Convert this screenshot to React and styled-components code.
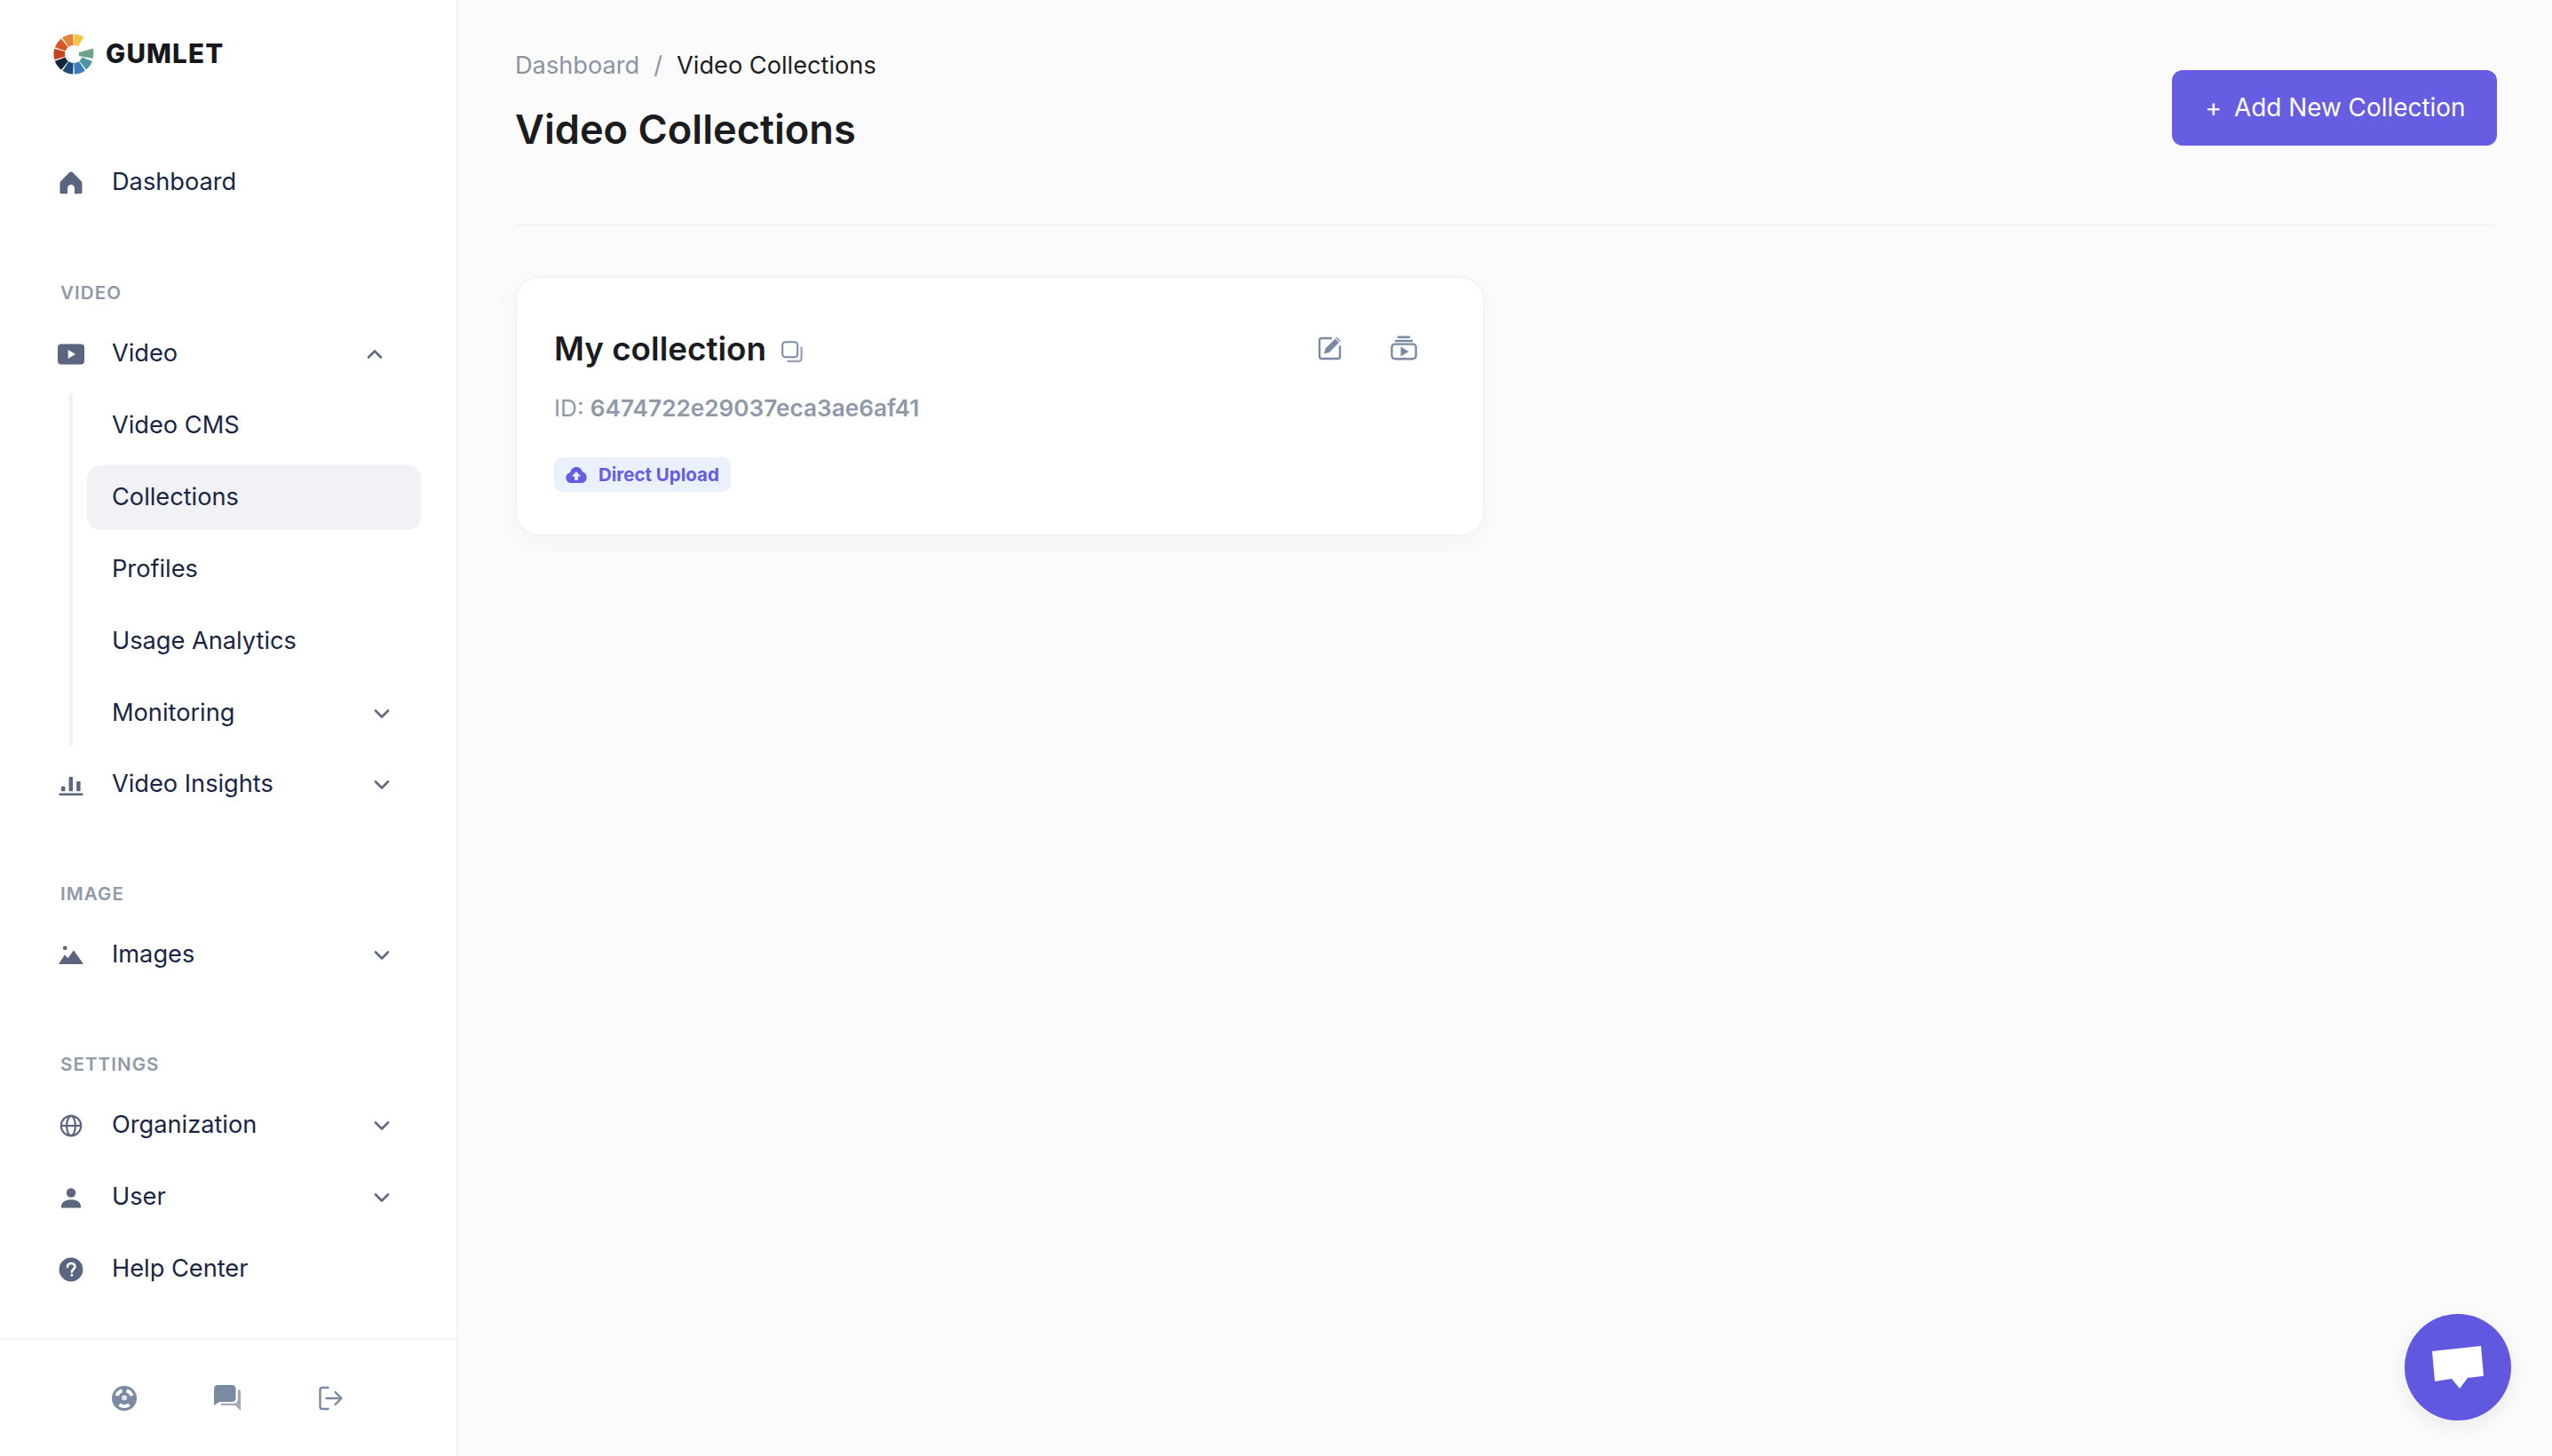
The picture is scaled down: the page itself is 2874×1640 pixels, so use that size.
import React from 'react';
import styled, { createGlobalStyle } from 'styled-components';

const Global = createGlobalStyle`
  html, body { margin: 0; padding: 0; background: #fbfbfc; }
  body { font-family: Inter, "Liberation Sans", sans-serif; -webkit-font-smoothing: antialiased; }
  * { box-sizing: border-box; }
`;

const Page = styled.div`
  display: flex;
  width: 2874px;
  height: 1640px;
  overflow: hidden;
  position: relative;
  background: #fbfbfc;
`;
const Sidebar = styled.aside`
  width: 516px;
  flex: none;
  display: flex;
  flex-direction: column;
  background: #fff;
  border-right: 2px solid #f2f2f7;
`;
const Brand = styled.div`
  height: 169px;
  padding: 38px 0 0 60px;
  display: flex;
  align-items: flex-start;
  gap: 13px;
`;
const BrandName = styled.span`
  font-size: 29.5px;
  line-height: 44px;
  font-weight: 800;
  letter-spacing: 1.2px;
  color: #17181c;
`;
const NavGroup = styled.nav`
  display: flex;
  flex-direction: column;
  gap: 8px;
  margin-bottom: ${p => p.$mb || 0}px;
`;
const SectionLabel = styled.div`
  height: 36px;
  line-height: 36px;
  padding-left: 68px;
  margin-bottom: 14px;
  font-size: 20.5px;
  font-weight: 600;
  letter-spacing: 1.1px;
  color: #8f99a8;
`;
const Row = styled.div`
  height: 73px;
  display: flex;
  align-items: center;
  padding-left: 62px;
  font-size: 27.2px;
  color: #1a2546;
`;
const IconSlot = styled.span`
  width: 36px;
  height: 36px;
  flex: none;
  display: flex;
  align-items: center;
  justify-content: center;
  margin-right: 28px;
  color: #5b6580;
`;
const RowText = styled.span`
  flex: 1;
  padding-bottom: 2px;
`;
const Chevron = styled.svg`
  width: 22px;
  height: 22px;
  flex: none;
  margin-right: ${p => p.$mr}px;
  color: #5f6b80;
`;
const SubList = styled.div`
  margin: 0 0 -1px 78px;
  border-left: 4px solid #f1f1f6;
  padding-left: 16px;
  display: flex;
  flex-direction: column;
  gap: 8px;
`;
const SubRow = styled.div`
  width: 376px;
  height: 73px;
  padding-left: 28px;
  display: flex;
  align-items: center;
  font-size: 27.2px;
  color: #1a2546;
  border-radius: 15px;
  background: ${p => (p.$active ? '#f1f2f6' : 'transparent')};
`;
const Footer = styled.div`
  margin-top: auto;
  height: 133px;
  border-top: 2px solid #f1f1f6;
  display: flex;
  justify-content: center;
  gap: 84px;
  align-items: center;
  padding-right: 3px;
  color: #7a8aa3;
`;
const FooterIcon = styled.span`
  width: 32px;
  height: 32px;
  display: flex;
  align-items: center;
  justify-content: center;
`;
const Main = styled.main`
  flex: 1;
  padding: 0 62px 0 64px;
  min-width: 0;
`;
const Header = styled.header`
  height: 255px;
  display: flex;
  justify-content: space-between;
  border-bottom: 2px solid #f1f1f6;
`;
const Crumbs = styled.div`
  padding-top: 56px;
  display: flex;
  align-items: center;
  gap: 16px;
  font-size: 27.2px;
  line-height: 35px;
  color: #8a94a3;
`;
const CrumbCurrent = styled.span`
  color: #1b1c26;
`;
const Title = styled.h1`
  margin: 26px 0 0;
  font-size: 45.2px;
  line-height: 58px;
  font-weight: 600;
  color: #1b1c1f;
`;
const AddButton = styled.button`
  margin-top: 79px;
  width: 366px;
  height: 85px;
  border: 0;
  padding: 0 0 2px 2px;
  border-radius: 12px;
  background: #665de3;
  color: #fff;
  display: flex;
  align-items: center;
  justify-content: center;
  gap: 14px;
  font: 400 27.9px Inter, sans-serif;
`;
const Card = styled.section`
  margin-top: 56px;
  width: 1092px;
  height: 293px;
  border-radius: 28px;
  background: #fff;
  border: 2px solid #f3f3f8;
  box-shadow: 0 8px 28px rgba(30, 30, 60, 0.035);
  padding: 0 42px;
`;
const CardTop = styled.div`
  height: 86px;
  margin-top: 36px;
  display: flex;
  align-items: center;
`;
const CardTitle = styled.h2`
  margin: 0;
  font-size: 36.8px;
  font-weight: 600;
  color: #1b1c1f;
`;
const CopyIcon = styled.svg`
  margin: 8px 0 0 17px;
  color: #7a8aa3;
`;
const CardActions = styled.div`
  margin-left: auto;
  display: flex;
  gap: 54px;
  padding-right: 32px;
  color: #7a8aa3;
`;
const IdLine = styled.div`
  margin-top: 7px;
  font-size: 26.2px;
  line-height: 36px;
  color: #8f99a8;
`;
const IdValue = styled.b`
  font-weight: 600;
`;
const Badge = styled.div`
  display: inline-flex;
  align-items: center;
  gap: 13px;
  margin-top: 37px;
  height: 39px;
  padding: 0 13px;
  border-radius: 9px;
  background: #ebf0fd;
  color: #665de3;
  font-size: 20.5px;
  font-weight: 700;
`;
const ChatBubble = styled.div`
  position: absolute;
  left: 2708px;
  top: 1480px;
  width: 120px;
  height: 120px;
  border-radius: 50%;
  background: #6158e0;
  box-shadow: 0 6px 24px rgba(30, 30, 60, 0.08);
  display: flex;
  align-items: center;
  justify-content: center;
`;

const wedge = (a0, a1, r0, r1, cx = 23, cy = 23) => {
  const p = (a, r) => {
    const t = (a - 90) * Math.PI / 180;
    return `${(cx + r * Math.cos(t)).toFixed(2)} ${(cy + r * Math.sin(t)).toFixed(2)}`;
  };
  return `M${p(a0, r0)}L${p(a0, r1)}A${r1} ${r1} 0 0 1 ${p(a1, r1)}L${p(a1, r0)}A${r0} ${r0} 0 0 0 ${p(a0, r0)}Z`;
};
const logoSegs = [
  [1, 30, '#f4c23f'], [111, 141, '#4f93a3'], [145, 178, '#3a7dbd'], [182, 214, '#1e4c78'],
  [218, 250, '#14283b'], [254, 286, '#c6431f'], [290, 321, '#d9582a'], [325, 358, '#e5823a'],
];
const Logo = () => (
  <svg width="46" height="46" viewBox="0 0 46 46">
    {logoSegs.map(([a, b, c]) => <path key={a} d={wedge(a, b, 10, 22.5)} fill={c} />)}
    <path d="M29 21 L45 16.5 C45.6 19.5 45.5 24 44.6 28 L29 25Z" fill="#6aa58a" />
  </svg>
);
const arc = (a0, a1, r) => {
  const p = a => {
    const t = (a - 90) * Math.PI / 180;
    return `${(15 + r * Math.cos(t)).toFixed(2)} ${(15 + r * Math.sin(t)).toFixed(2)}`;
  };
  return `M${p(a0)}A${r} ${r} 0 0 1 ${p(a1)}`;
};
const Ic = ({ s = 30, children, ...r }) => <svg width={s} height={s} viewBox="0 0 30 30" fill="currentColor" {...r}>{children}</svg>;
const Home = () => <Ic><path d="M15 2.5 C16 2.5 16.8 3 17.5 3.7 L26 12.6 C27 13.6 27.5 14.6 27.5 16 V25.5 C27.5 26.6 26.8 27.3 25.7 27.3 H19 V21 C19 18.7 17.3 17 15 17 C12.7 17 11 18.7 11 21 V27.3 H4.3 C3.2 27.3 2.5 26.6 2.5 25.5 V16 C2.5 14.6 3 13.6 4 12.6 L12.5 3.7 C13.2 3 14 2.5 15 2.5Z" /></Ic>;
const VideoIc = () => <Ic s={32} viewBox="0 0 32 32"><path fillRule="evenodd" d="M5 4.5 H27 C29.5 4.5 31 6 31 8.5 V23.5 C31 26 29.5 27.5 27 27.5 H5 C2.5 27.5 1 26 1 23.5 V8.5 C1 6 2.5 4.5 5 4.5Z M12.7 11 V21 L21 16Z" /></Ic>;
const Bars = () => <Ic><rect x="1.5" y="24.5" width="27" height="2.4" rx=".6" /><rect x="4" y="16.8" width="4.4" height="5.4" rx="1" /><rect x="12.6" y="6" width="4.4" height="16.2" rx="1" /><rect x="21.2" y="11" width="4.4" height="11.2" rx="1" /></Ic>;
const Mountain = () => <Ic><circle cx="8.2" cy="6.8" r="2.4" /><path d="M1 25 L7.8 14.5 L11.5 18.3 L18 9.2 L29 25Z" /></Ic>;
const Globe = () => <Ic fill="none" stroke="currentColor" strokeWidth="2.2"><circle cx="15" cy="15" r="11.2" /><ellipse cx="15" cy="15" rx="4.8" ry="11.2" /><path d="M3.8 15 H26.2" /></Ic>;
const UserIc = () => <Ic><circle cx="15" cy="9.5" r="5.2" /><path d="M4 25 C4 19.6 9.5 17.2 15 17.2 C20.5 17.2 26 19.6 26 25 V26.5 H4Z" /></Ic>;
const Help = () => <Ic><circle cx="15" cy="15" r="13.4" /><path d="M11 12 C11 9.5 13 8 15.2 8 C17.6 8 19.4 9.6 19.4 11.8 C19.4 14.6 15.9 14.8 15.9 17.6 M15.9 21.2 V21.5" fill="none" stroke="#fff" strokeWidth="2.7" strokeLinecap="round" /></Ic>;
const Chev = ({ up, mr }) => (
  <Chevron $mr={mr} viewBox="0 0 22 22" fill="none" stroke="currentColor" strokeWidth="2.6" strokeLinecap="round" strokeLinejoin="round">
    <path d={up ? 'M4 14.5 L11 7.5 L18 14.5' : 'M4 7.5 L11 14.5 L18 7.5'} />
  </Chevron>
);
const LifeRing = () => (
  <Ic>
    <circle cx="15" cy="15" r="14" />
    <g fill="none" stroke="#fff" strokeWidth="4">
      <path d={arc(288, 344, 9)} />
      <path d={arc(16, 72, 9)} />
      <path d={arc(142, 218, 9)} />
    </g>
    <circle cx="15" cy="14.5" r="3" fill="#dfe3ea" />
  </Ic>
);
const Chat = () => <Ic s={32} viewBox="0 0 32 32"><path d="M5.5 1 H21 C24 1 25.5 2.5 25.5 5.5 V15.5 C25.5 18.5 24 20 21 20 H7 L1 24 V5.5 C1 2.5 2.5 1 5.5 1Z" /><path d="M27.8 6.5 H29.6 C30.4 6.5 31 7.1 31 8 V30 L25 24 H9 V21.8 H23 C26 21.8 27.8 20 27.8 17Z" opacity=".72" /></Ic>;
const Logout = () => <Ic fill="none" stroke="currentColor" strokeWidth="2.4" strokeLinecap="round" strokeLinejoin="round"><path d="M12.5 3 H6 C4.5 3 3.5 4 3.5 5.5 V24.5 C3.5 26 4.5 27 6 27 H12.5" /><path d="M10.5 15 H27 M20.5 8 L27.5 15 L20.5 22" /></Ic>;
const Edit = () => <svg width="28" height="28" viewBox="0 0 28 28" fill="none" stroke="currentColor" strokeWidth="2.4" strokeLinecap="round"><path d="M15 3 H4.5 C3 3 2 4 2 5.5 V23.5 C2 25 3 26 4.5 26 H22.5 C24 26 25 25 25 23.5 V12.5" /><path d="M7 20.5 L8.6 14.6 L19.7 3.5 L24 7.8 L13 18.9Z M21.4 1.5 L25.8 5.9 L24.8 6.9 L20.5 2.6Z" fill="currentColor" stroke="none" /></svg>;
const Stack = () => <svg width="30" height="28" viewBox="0 0 30 28" fill="none" stroke="currentColor" strokeWidth="2.4"><path d="M9 1.8 H21" strokeLinecap="round" /><path d="M6 6 H24" strokeLinecap="round" /><rect x="1.4" y="9.6" width="27.2" height="16.6" rx="3.5" /><path d="M11.5 12.5 V23.5 L20.5 18Z" fill="currentColor" stroke="none" /></svg>;
const Copy = () => <CopyIcon as="svg" width="24" height="24" viewBox="0 0 24 24" fill="none" stroke="currentColor" strokeWidth="2"><rect x="1.2" y="1.2" width="17" height="17" rx="3.5" /><path d="M22.6 6.5 V19.5 C22.6 21.5 21.5 22.8 19.5 22.8 H6.5" strokeWidth="2.2" opacity=".8" /></CopyIcon>;
const Cloud = () => <svg width="24" height="20" viewBox="0 0 24 20"><path fillRule="evenodd" fill="currentColor" d="M12 1 C15.6 1 18.2 3.4 18.9 6.6 C21.7 7 23.6 9.2 23.6 13 C23.6 16.6 21.2 19 18 19 H6 C2.8 19 .4 16.6 .4 13.2 C.4 10 2.3 7.8 5.1 7.2 C6.2 3.4 8.6 1 12 1Z M12 6.2 L6.8 11.4 H10 V15.8 H14 V11.4 H17.2Z" /></svg>;

export default function App() {
  return (
    <Page>
      <Global />
      <Sidebar>
        <Brand><Logo /><BrandName>GUMLET</BrandName></Brand>
        <NavGroup $mb={70}>
          <Row><IconSlot><Home /></IconSlot><RowText>Dashboard</RowText></Row>
        </NavGroup>
        <SectionLabel>VIDEO</SectionLabel>
        <NavGroup $mb={69}>
          <Row><IconSlot><VideoIc /></IconSlot><RowText>Video</RowText><Chev up mr={81} /></Row>
          <SubList>
            <SubRow><RowText>Video CMS</RowText></SubRow>
            <SubRow $active><RowText>Collections</RowText></SubRow>
            <SubRow><RowText>Profiles</RowText></SubRow>
            <SubRow><RowText>Usage Analytics</RowText></SubRow>
            <SubRow><RowText>Monitoring</RowText><Chev mr={33} /></SubRow>
          </SubList>
          <Row><IconSlot><Bars /></IconSlot><RowText>Video Insights</RowText><Chev mr={73} /></Row>
        </NavGroup>
        <SectionLabel>IMAGE</SectionLabel>
        <NavGroup $mb={69}>
          <Row><IconSlot><Mountain /></IconSlot><RowText>Images</RowText><Chev mr={73} /></Row>
        </NavGroup>
        <SectionLabel>SETTINGS</SectionLabel>
        <NavGroup>
          <Row><IconSlot><Globe /></IconSlot><RowText>Organization</RowText><Chev mr={73} /></Row>
          <Row><IconSlot><UserIc /></IconSlot><RowText>User</RowText><Chev mr={73} /></Row>
          <Row><IconSlot><Help /></IconSlot><RowText>Help Center</RowText></Row>
        </NavGroup>
        <Footer>
          <FooterIcon><LifeRing /></FooterIcon>
          <FooterIcon><Chat /></FooterIcon>
          <FooterIcon><Logout /></FooterIcon>
        </Footer>
      </Sidebar>
      <Main>
        <Header>
          <div>
            <Crumbs><span>Dashboard</span><span>/</span><CrumbCurrent>Video Collections</CrumbCurrent></Crumbs>
            <Title>Video Collections</Title>
          </div>
          <AddButton><span>+</span><span>Add New Collection</span></AddButton>
        </Header>
        <Card>
          <CardTop>
            <CardTitle>My collection</CardTitle>
            <Copy />
            <CardActions><Edit /><Stack /></CardActions>
          </CardTop>
          <IdLine>ID: <IdValue>6474722e29037eca3ae6af41</IdValue></IdLine>
          <Badge><Cloud />Direct Upload</Badge>
        </Card>
      </Main>
      <ChatBubble>
        <svg width="60" height="50" viewBox="0 0 60 50"><path d="M1 7 L56 1 L59 35 L41 37 L32 49 L23 38 L4 41Z" fill="#fff" /></svg>
      </ChatBubble>
    </Page>
  );
}
